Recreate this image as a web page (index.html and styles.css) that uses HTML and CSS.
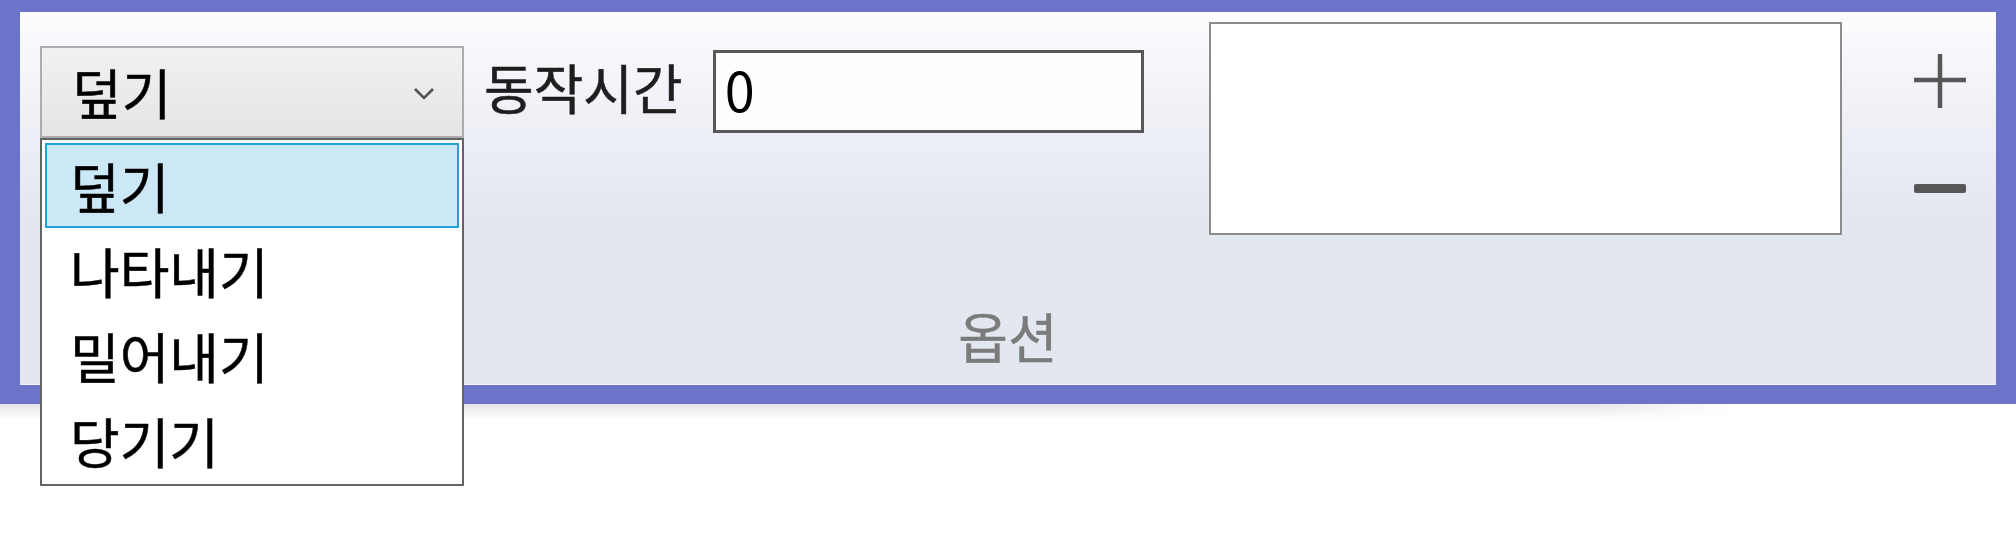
FILE: index.html
```html
<!DOCTYPE html>
<html lang="ko">
<head>
<meta charset="utf-8">
<title>옵션</title>
<link rel="stylesheet" href="styles.css">
</head>
<body>
<div class="frame">
  <div class="panel">
    <div class="row">
      <div class="combo-wrap">
        <div class="combo">
          <span class="combo-text">덮기</span>
          <svg class="chev" width="22" height="14" viewBox="0 0 22 14"><path d="M2 2 L11 11 L20 2" fill="none" stroke="#555" stroke-width="2.6"/></svg>
        </div>
        <ul class="list">
          <li class="sel">덮기</li>
          <li>나타내기</li>
          <li>밀어내기</li>
          <li>당기기</li>
        </ul>
      </div>
      <span class="label">동작시간</span>
      <div class="input">0</div>
      <div class="textarea"></div>
      <div class="pm">
        <svg class="plus" width="52" height="56" viewBox="0 0 52 56"><path d="M26 1 V55 M0 27 H52" stroke="#575757" stroke-width="4.5" fill="none"/></svg>
        <svg class="minus" width="52" height="9" viewBox="0 0 52 9"><rect x="0" y="0" width="52" height="9" rx="2" fill="#575757"/></svg>
      </div>
    </div>
    <div class="group-title">옵션</div>
  </div>
</div>
<div class="shadow"></div>
</body>
</html>
```
FILE: styles.css
```css
html, body {
  margin: 0;
  background: #ffffff;
}

body {
  min-height: 536px;
  font-family: "Noto Sans CJK KR", "Noto Sans", sans-serif;
}

.frame {
  border: 20px solid #6c74ca;
  border-top-width: 12px;
  border-bottom-width: 19px;
  height: 373px;
}

.panel {
  height: 100%;
  box-sizing: border-box;
  background: linear-gradient(#fcfcfe 0%, #eef0f6 30%, #e3e7f0 55%, #e3e7f0 100%);
  border-bottom: 1px solid #f3f5fa;
  display: flex;
  flex-direction: column;
}

.row {
  display: flex;
  align-items: flex-start;
  padding-left: 20px;
}

.combo-wrap {
  position: relative;
  margin-top: 34px;
  width: 424px;
  flex: none;
  z-index: 2;
}

.combo {
  box-sizing: border-box;
  height: 92px;
  border: 2px solid #acacac;
  background: linear-gradient(#f1f1f1, #e5e5e5);
  display: flex;
  align-items: center;
  padding-left: 30px;
  padding-right: 27px;
}

.combo-text {
  flex: 1;
  font-size: 54px;
  line-height: 88px;
  color: #000;
  -webkit-text-stroke: 0.5px #000;
}

.chev {
  flex: none;
  margin-top: 4px;
}

.list {
  position: absolute;
  top: 92px;
  left: 0;
  width: 424px;
  box-sizing: border-box;
  margin: 0;
  padding: 3px 3px 1px;
  list-style: none;
  background: #ffffff;
  border: 2px solid #646464;
}

.list li {
  box-sizing: border-box;
  height: 85px;
  line-height: 81px;
  padding-left: 23px;
  border: 2px solid transparent;
  font-size: 54px;
  color: #000;
  -webkit-text-stroke: 0.5px #000;
}

.list li.sel {
  background: #cce8f7;
  border-color: #26a0da;
}

.label {
  flex: none;
  margin-left: 20px;
  margin-top: 33px;
  font-size: 54px;
  line-height: 83px;
  color: #1e1e1e;
  -webkit-text-stroke: 0.5px #1e1e1e;
}

.input {
  flex: none;
  box-sizing: border-box;
  width: 431px;
  height: 83px;
  margin-left: 30px;
  margin-top: 38px;
  border: 3px solid #585858;
  background: #fdfdfe;
  padding-left: 9px;
  font-size: 54px;
  line-height: 72px;
  color: #000;
}

.textarea {
  flex: none;
  box-sizing: border-box;
  width: 633px;
  height: 213px;
  margin-left: 65px;
  margin-top: 10px;
  border: 2px solid #8c8c8c;
  background: #ffffff;
}

.pm {
  flex: none;
  width: 52px;
  margin-left: 72px;
  margin-top: 41px;
  display: flex;
  flex-direction: column;
  gap: 75px;
}

.plus, .minus {
  display: block;
}

.group-title {
  margin-top: auto;
  margin-bottom: 18px;
  text-align: center;
  font-size: 54px;
  line-height: 60px;
  color: #7b7b7b;
  -webkit-text-stroke: 0.4px #7b7b7b;
}

.shadow {
  width: 1733px;
  height: 16px;
  background: linear-gradient(rgba(0, 0, 0, 0.1), rgba(0, 0, 0, 0));
  -webkit-mask-image: linear-gradient(to right, #000 92%, transparent 100%);
  mask-image: linear-gradient(to right, #000 92%, transparent 100%);
}
```
